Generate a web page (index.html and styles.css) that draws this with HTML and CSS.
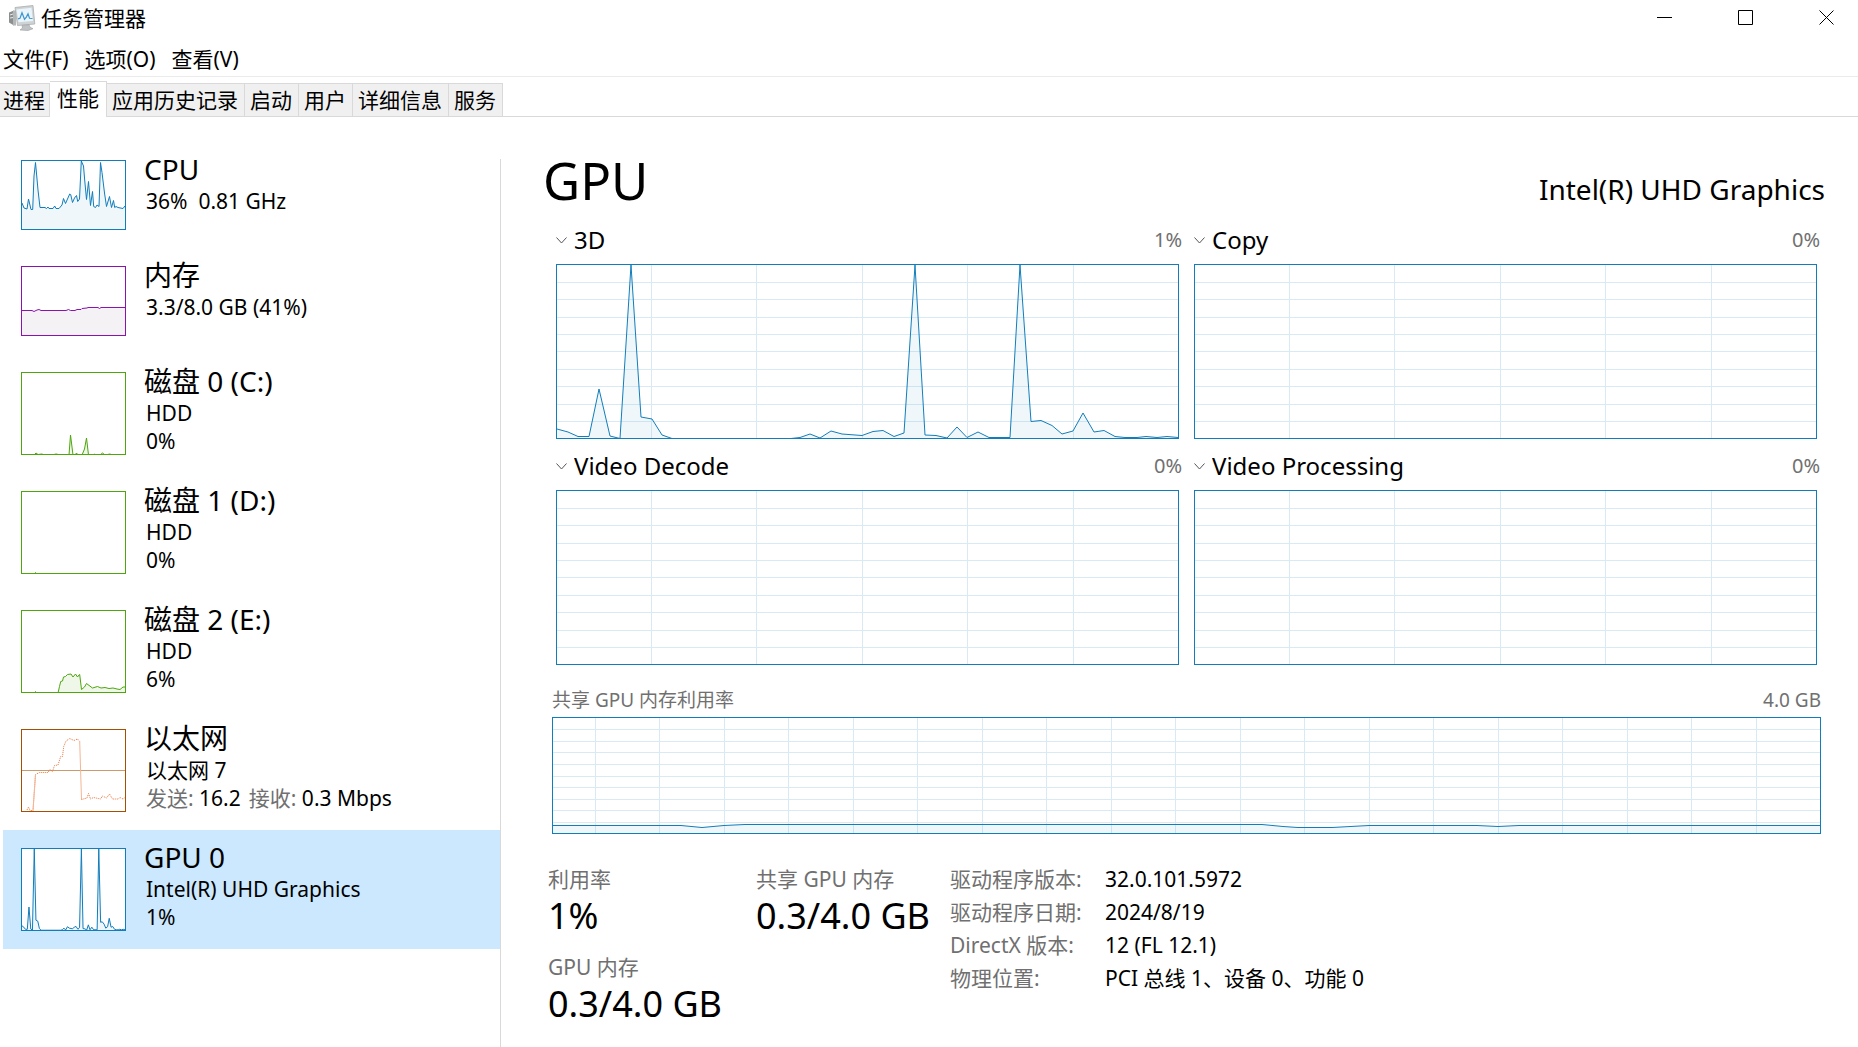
FILE: index.html
```html
<!DOCTYPE html>
<html lang="zh-CN">
<head>
<meta charset="utf-8">
<meta name="viewport" content="width=device-width, initial-scale=1">
<title>任务管理器</title>
<link rel="stylesheet" href="styles.css">
</head>
<body>
<header class="titlebar">
  <svg class="app-icon" viewBox="0 0 28 26" aria-hidden="true">
    <path d="M1 7.500 6 5.500v15l-5-3z" fill="#8c8f90"/>
    <path d="M5 5.500h3V20.500H5z" fill="#b4b8b9"/>
    <path d="M2 10l3-1M2 13l3-.5" stroke="#e8eaea" fill="none"/>
    <path d="M7 2.500 25 .500 26.800 19 9.500 20.500z" fill="#cfd3d4" stroke="#a9adaf" stroke-width=".8"/>
    <path d="M8.500 4.500 23.500 2.800 25 16 10.500 17.300z" fill="#e9f4fb"/>
    <path d="M10 13.800l2-.5 2-5.500 2.500 6.500 2-2.500 1.500-3 1.500 4.500 3 .2" fill="none" stroke="#3f95cf" stroke-width="1.200"/>
    <path d="M14 20.500l7-.8 1 2.500 3 1.500-5 1.800-8-.5 2.500-2z" fill="#bfc3c5" stroke="#9a9ea0" stroke-width=".6"/>
  </svg>
  <h1 class="app-title">任务管理器</h1>
  <div class="window-buttons">
    <button class="window-button" type="button" aria-label="最小化"><svg viewBox="0 0 15 15"><path d="M0 7.500h15"/></svg></button>
    <button class="window-button" type="button" aria-label="最大化"><svg viewBox="0 0 15 15"><path d="M.5.5h14v14H.5z"/></svg></button>
    <button class="window-button" type="button" aria-label="关闭"><svg viewBox="0 0 15 15"><path d="M.5.5l14 14M14.500.5l-14 14"/></svg></button>
  </div>
</header>

<nav class="menubar">
  <button type="button">文件(F)</button>
  <button type="button">选项(O)</button>
  <button type="button">查看(V)</button>
</nav>

<div class="tabs" role="tablist">
  <button class="tab tab-first" type="button" role="tab">进程</button>
  <button class="tab tab-selected" type="button" role="tab" aria-selected="true">性能</button>
  <button class="tab" type="button" role="tab">应用历史记录</button>
  <button class="tab" type="button" role="tab">启动</button>
  <button class="tab" type="button" role="tab">用户</button>
  <button class="tab" type="button" role="tab">详细信息</button>
  <button class="tab" type="button" role="tab">服务</button>
</div>

<main class="content">
  <nav class="resources">
    <button class="resource" type="button">
      <svg class="thumb thumb-short blue" viewBox="0 0 103 68" preserveAspectRatio="none" aria-hidden="true">
        <path class="area" d="M-2 70V42H0L2 47 5 48 6.500 38 9 48.500H10.700L12 15 13.500 1.500 16 29 18 46.500H23L24.500 47.500 26 46 27 47.500H31L32.700 45 34 47.500H37L40 44 41.500 37.500 43.500 42.500 47.700 33 48.700 33.500 50.500 41.500 52.500 37 54.500 34.500 55.700 40.500 57.500 38 59.300 0 61.500 5 62.700 19 64.500 38.500 66.500 20.500 68.500 44.500 70.500 30.500 71.700 45.500 73.500 46.500 75 44 77 45.500 78.500 1.500 80 11.500 82.500 32 84.500 45.500 87.500 35.500 89.500 46.500 91.500 39.500 92.700 46.500 94 45.500 96 46.500 101 47.500 103 45H105V70z"/>
      </svg>
      <span class="resource-text">
        <span class="resource-name">CPU</span>
        <span class="resource-line">36%&nbsp; 0.81 GHz</span>
      </span>
    </button>
    <button class="resource" type="button">
      <svg class="thumb thumb-short purple" viewBox="0 0 103 68" preserveAspectRatio="none" aria-hidden="true">
        <path class="area" d="M-2 70V43.500H10L12 44.500 15 43 17 42.500 19 43.500H44L46.500 42.500 48.500 43.500H53L55 42.500H59L60 41.500 65 41 66 40.500H76L77.500 41.500 79 40.500H105V70z"/>
      </svg>
      <span class="resource-text">
        <span class="resource-name">内存</span>
        <span class="resource-line">3.3/8.0 GB (41%)</span>
      </span>
    </button>
    <button class="resource" type="button">
      <svg class="thumb green" viewBox="0 0 103 81" preserveAspectRatio="none" aria-hidden="true">
        <path class="area" d="M-2 83V82H12L14 80 16 81.500 20 81 22 82 32 81.500 34 81 39 82H47L48.500 62 51 82H53L54.500 80 56 82H60L62.500 76 64.500 65 66.500 82H71L72 81 74 82H78L80.500 80 83 82 88 81 90 82H105V83z"/>
      </svg>
      <span class="resource-text">
        <span class="resource-name">磁盘 0 (C:)</span>
        <span class="resource-line">HDD</span>
        <span class="resource-line">0%</span>
      </span>
    </button>
    <button class="resource" type="button">
      <svg class="thumb green" viewBox="0 0 103 81" preserveAspectRatio="none" aria-hidden="true">
        <path class="area" d="M-2 83V82H12L13.500 80.500 15 82H105V83z"/>
      </svg>
      <span class="resource-text">
        <span class="resource-name">磁盘 1 (D:)</span>
        <span class="resource-line">HDD</span>
        <span class="resource-line">0%</span>
      </span>
    </button>
    <button class="resource" type="button">
      <svg class="thumb green" viewBox="0 0 103 81" preserveAspectRatio="none" aria-hidden="true">
        <path class="area" d="M-2 83V82H12L13.500 80.500 15 82H36L37.500 75.500 38.700 70.500 40.500 70 41.500 66 43.500 65.500 45.500 63.500 49 63 51 66 53.500 63 55.500 66 57 64 57.700 63.500 59.500 78.500 62.500 76 64.500 72.500 70.500 77 75.500 75.500 79 77 83 76.500 87 77.500 91 77 95 78 98 78.500 101 76H105V83z"/>
      </svg>
      <span class="resource-text">
        <span class="resource-name">磁盘 2 (E:)</span>
        <span class="resource-line">HDD</span>
        <span class="resource-line">6%</span>
      </span>
    </button>
    <button class="resource" type="button">
      <svg class="thumb brown" viewBox="0 0 103 81" preserveAspectRatio="none" aria-hidden="true">
        <path class="scale-mark" d="M0 40.500H103"/>
        <path class="sent" d="M5 80 6.500 77 8 80.500H11L13.500 44.500 17.500 42.500H26L28 39.500 30.500 41.500 32.500 35.500 36 35 38.700 26.500H40.500L41.700 16.500 44 11 47.700 8.500 52 10.500 55.500 9 57.700 11.500"/>
        <path class="sent-drop" d="M11 80.500 13.500 44.500M57.700 11.500 59.500 69.500"/>
        <path class="sent" d="M59.500 69.500 65 68 66.500 63.500 68.500 69 71.500 67.500 78.500 69 80.500 66 84.500 68 87.500 64 90.500 69H96L98 67.500 101 69 103 67.500"/>
      </svg>
      <span class="resource-text">
        <span class="resource-name">以太网</span>
        <span class="resource-line">以太网 7</span>
        <span class="resource-line rates"><span><span class="muted">发送:</span> 16.2</span><span><span class="muted">接收:</span> 0.3 Mbps</span></span>
      </span>
    </button>
    <button class="resource resource-selected" type="button" aria-current="true">
      <svg class="thumb blue" viewBox="0 0 621 173" preserveAspectRatio="none" aria-hidden="true">
        <use href="#gpu-3d"/>
      </svg>
      <span class="resource-text">
        <span class="resource-name">GPU 0</span>
        <span class="resource-line">Intel(R) UHD Graphics</span>
        <span class="resource-line">1%</span>
      </span>
    </button>
  </nav>

  <section class="detail">
    <header class="detail-header">
      <h2>GPU</h2>
      <p>Intel(R) UHD Graphics</p>
    </header>

    <div class="engines">
      <div class="engine">
        <div class="engine-header">
          <svg class="chevron" viewBox="0 0 11 7" aria-hidden="true"><path d="M.5.5l5 5.500 5-5.500"/></svg>
          <select aria-label="引擎 1"><option>3D</option></select>
          <span class="reading">1%</span>
        </div>
        <svg class="chart blue" viewBox="0 0 621 173" preserveAspectRatio="none" role="img" aria-label="3D">
          <path id="grid" class="grid" d="M0 17.500H621M0 34.500H621M0 52.500H621M0 69.500H621M0 86.500H621M0 104.500H621M0 121.500H621M0 139.500H621M0 156.500H621M94.500 0V173M199.500 0V173M305.500 0V173M410.500 0V173M516.500 0V173"/>
          <path id="gpu-3d" class="area" d="M-9 180V164H0L11 167 21 171.500H32L42 124 53 171 63 173.500 74 0 84 152 95 154 105 170 115 173.500H234L243 172.500 253 169 263 173 274 166 285 169 305 170.500 316 166.500 326 165.500 337 171.500 347 168 358 0 368 170 379 170.500 390 173 400 162 410 172.500 421 167 432 172.500H453L463 0 474 156.500 484 155.500 495 160.500 505 169 516 166 526 148 537 167 547 165.500 558 171.500 568 172.500H580L589 171.500 600 172.500 610 171.500 621 172.500H630V180z"/>
        </svg>
      </div>
      <div class="engine">
        <div class="engine-header">
          <svg class="chevron" viewBox="0 0 11 7" aria-hidden="true"><path d="M.5.5l5 5.500 5-5.500"/></svg>
          <select aria-label="引擎 2"><option>Copy</option></select>
          <span class="reading">0%</span>
        </div>
        <svg class="chart blue" viewBox="0 0 621 173" preserveAspectRatio="none" role="img" aria-label="Copy"><use href="#grid"/></svg>
      </div>
      <div class="engine">
        <div class="engine-header">
          <svg class="chevron" viewBox="0 0 11 7" aria-hidden="true"><path d="M.5.5l5 5.500 5-5.500"/></svg>
          <select aria-label="引擎 3"><option>Video Decode</option></select>
          <span class="reading">0%</span>
        </div>
        <svg class="chart blue" viewBox="0 0 621 173" preserveAspectRatio="none" role="img" aria-label="Video Decode"><use href="#grid"/></svg>
      </div>
      <div class="engine">
        <div class="engine-header">
          <svg class="chevron" viewBox="0 0 11 7" aria-hidden="true"><path d="M.5.5l5 5.500 5-5.500"/></svg>
          <select aria-label="引擎 4"><option>Video Processing</option></select>
          <span class="reading">0%</span>
        </div>
        <svg class="chart blue" viewBox="0 0 621 173" preserveAspectRatio="none" role="img" aria-label="Video Processing"><use href="#grid"/></svg>
      </div>
    </div>

    <div class="memory">
      <div class="memory-header"><span>共享 GPU 内存利用率</span><span>4.0 GB</span></div>
      <svg class="chart chart-memory blue" viewBox="0 0 1267 115" preserveAspectRatio="none" role="img" aria-label="共享 GPU 内存利用率">
        <path class="grid" d="M0 11.500H1267M0 23.500H1267M0 34.500H1267M0 46.500H1267M0 58.500H1267M0 69.500H1267M0 81.500H1267M0 92.500H1267M0 104.500H1267M42.500 0V115M106.500 0V115M171.500 0V115M235.500 0V115M300.500 0V115M364.500 0V115M429.500 0V115M493.500 0V115M558.500 0V115M622.500 0V115M687.500 0V115M751.500 0V115M816.500 0V115M880.500 0V115M945.500 0V115M1009.500 0V115M1074.500 0V115M1138.500 0V115M1203.500 0V115"/>
        <path class="area" d="M-9 120V107.500H128L149 109.500 171 107.500 192 106.500H709L730 108.500 745 109.500H779L816 107.500H924L945 108.500 966 107.500H1280V120z"/>
      </svg>
    </div>

    <div class="stats">
      <dl class="stat stat-usage"><dt>利用率</dt><dd>1%</dd></dl>
      <dl class="stat stat-shared"><dt>共享 GPU 内存</dt><dd>0.3/4.0 GB</dd></dl>
      <dl class="stat stat-total"><dt>GPU 内存</dt><dd>0.3/4.0 GB</dd></dl>
      <table class="facts">
        <tr><th scope="row">驱动程序版本:</th><td>32.0.101.5972</td></tr>
        <tr><th scope="row">驱动程序日期:</th><td>2024/8/19</td></tr>
        <tr><th scope="row">DirectX 版本:</th><td>12 (FL 12.1)</td></tr>
        <tr><th scope="row">物理位置:</th><td>PCI 总线 1、设备 0、功能 0</td></tr>
      </table>
    </div>
  </section>
</main>
</body>
</html>
```
FILE: styles.css
```css
* {
  box-sizing: border-box;
}

body {
  display: flex;
  flex-direction: column;
  min-height: 100vh;
  margin: 0;
  background: #fff;
  color: #000;
  font-family: "Noto Sans", "Noto Sans CJK SC", sans-serif;
  font-size: 21px;
  line-height: 28px;
}

h1, h2, p, dl, dd {
  margin: 0;
  font-weight: 400;
}

button, select {
  margin: 0;
  padding: 0;
  border: 0;
  background: none;
  color: inherit;
  font: inherit;
}

/* Title bar */
.titlebar {
  display: flex;
  align-items: center;
  height: 35px;
  padding-left: 8px;
}

.app-icon {
  width: 28px;
  height: 26px;
}

.app-title {
  margin-left: 5px;
  font-size: 21px;
}

.window-buttons {
  display: flex;
  gap: 18px;
  margin-left: auto;
}

.window-button {
  display: flex;
  align-items: center;
  justify-content: center;
  width: 63px;
  height: 35px;
}

.window-button svg {
  width: 15px;
  height: 15px;
  fill: none;
  stroke: #000;
}

/* Menu bar */
.menubar {
  display: flex;
  align-items: center;
  gap: 16px;
  height: 42px;
  padding: 6px 0 0 3px;
  border-bottom: 1px solid #ebebeb;
}

/* Tabs */
.tabs {
  display: flex;
  align-items: flex-end;
  height: 40px;
  border-bottom: 1px solid #d9d9d9;
}

.tab {
  height: 33px;
  padding: 0 6px 0 5px;
  border: solid #d9d9d9;
  border-width: 1px 1px 0 0;
  background: #f0f0f0;
  white-space: nowrap;
}

.tab-first {
  padding: 0 4px 0 3px;
}

.tab-selected {
  height: 36px;
  margin-bottom: -1px;
  padding: 0 7px 4px;
  background: #fff;
}

/* Resource list */
.content {
  display: flex;
  flex: 1;
}

.resources {
  flex: none;
  width: 500px;
  padding: 25px 0 0 3px;
}

.resource {
  display: flex;
  align-items: flex-start;
  width: 100%;
  padding: 0 18px;
  text-align: left;
}

.resource-selected {
  background: #cce8ff;
}

.thumb {
  box-sizing: content-box;
  flex: none;
  width: 103px;
  height: 81px;
  margin: 18px 0;
  border: 1px solid var(--line);
  background: #fff;
}

.thumb-short {
  height: 68px;
}

.resource-text {
  padding: 9px 0 0 20px;
}

.resource-name,
.resource-line {
  display: block;
  white-space: nowrap;
}

.resource-name {
  margin-left: -2px;
  font-size: 28px;
  line-height: 36px;
}

.rates {
  display: flex;
  gap: 8px;
}

.muted {
  color: #707070;
}

/* Graph colours */
.blue { --line: #117dbb; --fill: #117dbb10; }
.purple { --line: #8b12ae; --fill: #f4f2f4; }
.green { --line: #4da60c; --fill: #eff7e9; }
.brown { --line: #a74f01; --fill: none; }

.area,
.grid,
.scale-mark,
.sent,
.sent-drop {
  fill: none;
  vector-effect: non-scaling-stroke;
}

.area {
  fill: var(--fill);
  stroke: var(--line);
}

.grid {
  stroke: #d9eaf4;
  shape-rendering: crispEdges;
}

.scale-mark {
  stroke: #cc9a6b;
}

.sent {
  stroke: #e8773f;
  stroke-dasharray: 1 1;
}

.sent-drop {
  stroke: #f4b594;
}

/* Detail pane */
.detail {
  flex: 1;
  min-width: 0;
  margin-top: 42px;
  padding: 0 37px 16px 51px;
  border-left: 1px solid #d9d9d9;
}

.detail-header {
  display: flex;
  align-items: baseline;
  justify-content: space-between;
  height: 63px;
  margin: 0 -4px 0 -9px;
}

.detail-header h2 {
  font-size: 51px;
  line-height: 42px;
}

.detail-header p {
  font-size: 28px;
}

.engines {
  display: grid;
  grid-template-columns: 1fr 1fr;
  gap: 9px 7px;
}

.engine-header {
  display: flex;
  align-items: center;
  height: 36px;
  margin-bottom: 6px;
  padding: 0 1px 0 4px;
}

.chevron {
  width: 11px;
  height: 7px;
  margin-right: 7px;
  fill: none;
  stroke: #555;
}

.engine-header select {
  appearance: none;
  font-size: 24px;
  line-height: 36px;
}

.reading {
  margin-left: auto;
  color: #707070;
  font-size: 20px;
}

.chart {
  display: block;
  box-sizing: content-box;
  width: calc(100% - 10px);
  height: 173px;
  margin: 0 4px;
  border: 1px solid var(--line);
}

.chart-memory {
  width: calc(100% - 2px);
  height: 115px;
  margin: 0;
}

.memory {
  margin-top: 21px;
}

.memory-header {
  display: flex;
  justify-content: space-between;
  padding-bottom: 3px;
  color: #707070;
  font-size: 19px;
}

/* Figures under the graphs */
.stats {
  display: grid;
  grid-template-columns: 208px 194px 1fr;
  gap: 14px 0;
  margin: 31px 0 0 -4px;
}

.stat-total {
  grid-row: 2;
}

.stat dt,
.facts th {
  color: #707070;
  font-weight: 400;
}

.stat dd {
  font-size: 36px;
  line-height: 46px;
}

.facts {
  grid-row: 1 / span 2;
  grid-column: 3;
  align-self: start;
  justify-self: start;
  margin-top: -2px;
  border-collapse: collapse;
}

.facts th,
.facts td {
  padding: 0;
  line-height: 33px;
  text-align: left;
  white-space: nowrap;
}

.facts th {
  width: 155px;
}
```
